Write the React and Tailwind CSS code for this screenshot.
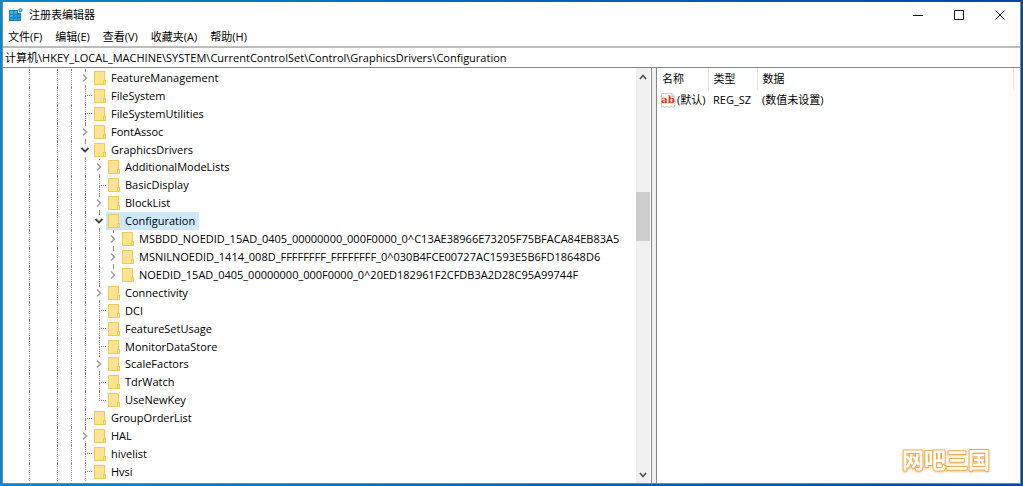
import { clsx } from 'clsx';

const MENUS = ['文件(F)', '编辑(E)', '查看(V)', '收藏夹(A)', '帮助(H)'];

const KEYS = [
  { name: 'FeatureManagement', level: 1, state: 'closed' },
  { name: 'FileSystem', level: 1 },
  { name: 'FileSystemUtilities', level: 1 },
  { name: 'FontAssoc', level: 1, state: 'closed' },
  { name: 'GraphicsDrivers', level: 1, state: 'open' },
  { name: 'AdditionalModeLists', level: 2, state: 'closed' },
  { name: 'BasicDisplay', level: 2 },
  { name: 'BlockList', level: 2, state: 'closed' },
  { name: 'Configuration', level: 2, state: 'open', selected: true },
  { name: 'MSBDD_NOEDID_15AD_0405_00000000_000F0000_0^C13AE38966E73205F75BFACA84EB83A5', level: 3, state: 'closed' },
  { name: 'MSNILNOEDID_1414_008D_FFFFFFFF_FFFFFFFF_0^030B4FCE00727AC1593E5B6FD18648D6', level: 3, state: 'closed' },
  { name: 'NOEDID_15AD_0405_00000000_000F0000_0^20ED182961F2CFDB3A2D28C95A99744F', level: 3, state: 'closed', last: true },
  { name: 'Connectivity', level: 2, state: 'closed' },
  { name: 'DCI', level: 2 },
  { name: 'FeatureSetUsage', level: 2 },
  { name: 'MonitorDataStore', level: 2 },
  { name: 'ScaleFactors', level: 2, state: 'closed' },
  { name: 'TdrWatch', level: 2 },
  { name: 'UseNewKey', level: 2, last: true },
  { name: 'GroupOrderList', level: 1 },
  { name: 'HAL', level: 1, state: 'closed' },
  { name: 'hivelist', level: 1 },
  { name: 'Hvsi', level: 1 },
];

// which ancestor columns carry a vertical guide, outermost first
const GUIDES = [true, false, true, true, true, true];

function RegeditIcon() {
  return (
    <svg viewBox="0 0 14 14" className="w-3.5 h-3.5" aria-hidden="true">
      <path d="M0 2h9v3h3v8H0z" fill="#1583bd" />
      <path d="M1 3h3v3H1zM5 3h3v3H5zM1 7h3v2H1z" fill="#35b4e8" />
      <path d="M5 7h3v2H5zM9 7h2v2H9zM1 10h3v2H1zM5 10h3v2H5zM9 10h2v2H9z" fill="#1ea0dc" />
      <path d="M11.5 0l2.3 1.6-.8 2.6h-2.9l-.9-2.6z" fill="#2f9bd2" />
      <circle cx="11.5" cy="2.2" r=".8" fill="#9bdcf7" />
    </svg>
  );
}

function FolderIcon() {
  return (
    <svg viewBox="0 0 12 14" className="w-3 h-3.5 shrink-0" aria-hidden="true">
      <path d="M0 0h11v9h1v5H0z" fill="#f0ca55" />
      <path d="M1 1h9v8H9v4H1z" fill="#ffe390" />
      <path d="M10 10h1v3h-1z" fill="#ffe390" />
    </svg>
  );
}

function StringValueIcon() {
  return (
    <svg viewBox="0 0 15 15" className="w-[15px] h-[15px] shrink-0" aria-hidden="true">
      <path d="M.5.5h10.500l3 3v9.500l-2 1.500-2-1-2 1-2-1-2 1-2-1-1.500 1z" fill="#f6f6f6" stroke="#c8c8c8" />
      <path d="M11 .5v3h3" fill="none" stroke="#c8c8c8" />
      <text x="7" y="10" textAnchor="middle" fontSize="10" fontWeight="700" fill="#d8371c" fontFamily="DejaVu Serif, serif" textRendering="geometricPrecision">ab</text>
    </svg>
  );
}

function Chevron({ open }) {
  return (
    <svg viewBox="0 0 10 10" className="w-2.5 h-2.5" fill="none" aria-hidden="true">
      {open ? (
        <path d="M1.500 3l3.500 3.500 3.500-3.500" stroke="#404040" strokeWidth="1.8" />
      ) : (
        <path d="M3 1.500l3.500 3.500-3.500 3.500" stroke="#a0a0a0" strokeWidth="1.6" />
      )}
    </svg>
  );
}

function Guide({ visible }) {
  return (
    <span className="flex justify-center w-3.5 shrink-0">
      {visible && <span className="border-[#8c8c8c] border-l border-dotted" />}
    </span>
  );
}

function Branch({ item }) {
  if (item.state) {
    return (
      <span className="flex flex-col items-center w-3.5 shrink-0">
        <span className="flex-1 border-[#8c8c8c] border-l border-dotted" />
        <button type="button" aria-label={item.state === 'open' ? '折叠' : '展开'} className="py-0.5">
          <Chevron open={item.state === 'open'} />
        </button>
        <span className={clsx('flex-1 border-l border-dotted', item.last ? 'border-transparent' : 'border-[#8c8c8c]')} />
      </span>
    );
  }
  return (
    <span className="grid grid-cols-2 w-3.5 shrink-0">
      <span />
      <span className="flex flex-col">
        <span className="flex-1 border-[#8c8c8c] border-b border-l border-dotted" />
        <span className={clsx('flex-1 border-l border-dotted', item.last ? 'border-transparent' : 'border-[#8c8c8c]')} />
      </span>
    </span>
  );
}

function TreeRow({ item }) {
  return (
    <li role="treeitem" aria-level={item.level} aria-selected={!!item.selected} className="flex flex-1 pl-[19px] min-h-0">
      {GUIDES.slice(0, item.level + 3).map((visible, i) => (
        <Guide key={i} visible={visible} />
      ))}
      <Branch item={item} />
      <span className={clsx('flex items-center gap-[5px] pr-1 pl-0.5 whitespace-nowrap', item.selected && 'bg-[#cce8ff]')}>
        <FolderIcon />
        <span>{item.name}</span>
      </span>
    </li>
  );
}

function ScrollBar() {
  return (
    <div className="flex flex-col items-center bg-[#f0f0f0] w-3.5 shrink-0">
      <button type="button" aria-label="向上滚动" className="flex justify-center items-center w-full h-[17px]">
        <svg viewBox="0 0 8 8" className="w-2 h-2" fill="none"><path d="M1 6l3-3.500 3 3.500" stroke="#505050" strokeWidth="1.6" /></svg>
      </button>
      <div className="flex flex-col flex-1 w-full">
        <div className="grow-[107]" />
        <div className="bg-[#cdcdcd] grow-[49]" />
        <div className="grow-[225]" />
      </div>
      <button type="button" aria-label="向下滚动" className="flex justify-center items-center w-full h-[17px]">
        <svg viewBox="0 0 8 8" className="w-2 h-2" fill="none"><path d="M1 2l3 3.500 3-3.500" stroke="#505050" strokeWidth="1.6" /></svg>
      </button>
    </div>
  );
}

function TitleBar() {
  return (
    <header className="flex items-center h-[26px]">
      <div className="flex flex-1 items-center gap-[6px] pl-[6px]">
        <RegeditIcon />
        <h1>注册表编辑器</h1>
      </div>
      <button type="button" aria-label="最小化" className="flex justify-center items-center w-[41px] h-full">
        <svg viewBox="0 0 10 10" className="w-2.5 h-2.5"><path d="M0 5.500h10" stroke="#111" /></svg>
      </button>
      <button type="button" aria-label="最大化" className="flex justify-center items-center w-[41px] h-full">
        <svg viewBox="0 0 10 10" className="w-2.5 h-2.5" fill="none"><path d="M.5.5h9v9h-9z" stroke="#111" /></svg>
      </button>
      <button type="button" aria-label="关闭" className="flex justify-center items-center w-[41px] h-full">
        <svg viewBox="0 0 10 10" className="w-2.5 h-2.5"><path d="M.5.5l9 9M9.500.5l-9 9" stroke="#111" /></svg>
      </button>
    </header>
  );
}

function ValueList() {
  return (
    <section className="flex-1 pr-[6px] border-[#828790] border-l min-w-0">
      <table className="w-full text-left table-fixed">
        <thead>
          <tr className="h-[22px]">
            <th className="pl-[5px] border-[#e5e5e5] border-r w-[51px] font-normal">名称</th>
            <th className="pl-[5px] border-[#e5e5e5] border-r w-[49px] font-normal">类型</th>
            <th className="pl-[5px] border-[#e5e5e5] border-r font-normal">数据</th>
          </tr>
        </thead>
        <tbody>
          <tr className="h-5 whitespace-nowrap">
            <td className="pl-1">
              <span className="flex items-center gap-px"><StringValueIcon />(默认)</span>
            </td>
            <td className="pl-[5px]">REG_SZ</td>
            <td className="pl-[5px]">(数值未设置)</td>
          </tr>
        </tbody>
      </table>
    </section>
  );
}

export default function App() {
  return (
    <div className="bg-linear-to-r from-[#0a86cc] to-[#0446a4] p-0.5 h-screen text-[11px] text-black leading-4 font-['Open_Sans','Noto_Sans_CJK_SC',sans-serif]">
      <div className="relative flex flex-col bg-white border-[#828790] border-x h-full">
        <TitleBar />
        <nav className="flex items-center gap-[13px] px-[5px] h-[18px]">
          {MENUS.map((m) => (
            <button key={m} type="button">{m}</button>
          ))}
        </nav>
        <input
          aria-label="地址"
          className="px-0.5 pb-0.5 border-[#bcbcbc] border-t-2 outline-none w-full h-[21px]"
          defaultValue="计算机\HKEY_LOCAL_MACHINE\SYSTEM\CurrentControlSet\Control\GraphicsDrivers\Configuration"
        />
        <main className="flex flex-1 border-[#828790] border-y min-h-0">
          <div className="flex border-[#828790] border-r w-[649px] shrink-0">
            <ul role="tree" className="flex flex-col flex-1 pt-px pb-0.5 min-w-0">
              {KEYS.map((k) => (
                <TreeRow key={k.name} item={k} />
              ))}
            </ul>
            <ScrollBar />
            <div className="w-px" />
          </div>
          <div className="bg-[#f0f0f0] w-1 shrink-0" />
          <ValueList />
        </main>
        <div className="right-[22px] bottom-0.5 absolute">
          <svg viewBox="0 0 104 48" className="drop-shadow-[0_1px_1px_#f3c98a] w-[104px] h-12">
            <text x="8" y="34" fontSize="22" fontWeight="700" fontFamily="Noto Sans CJK SC, sans-serif" fill="#fff" stroke="#f0ac50" strokeWidth="2" strokeLinejoin="round" paintOrder="stroke">网吧三国</text>
          </svg>
        </div>
      </div>
    </div>
  );
}
